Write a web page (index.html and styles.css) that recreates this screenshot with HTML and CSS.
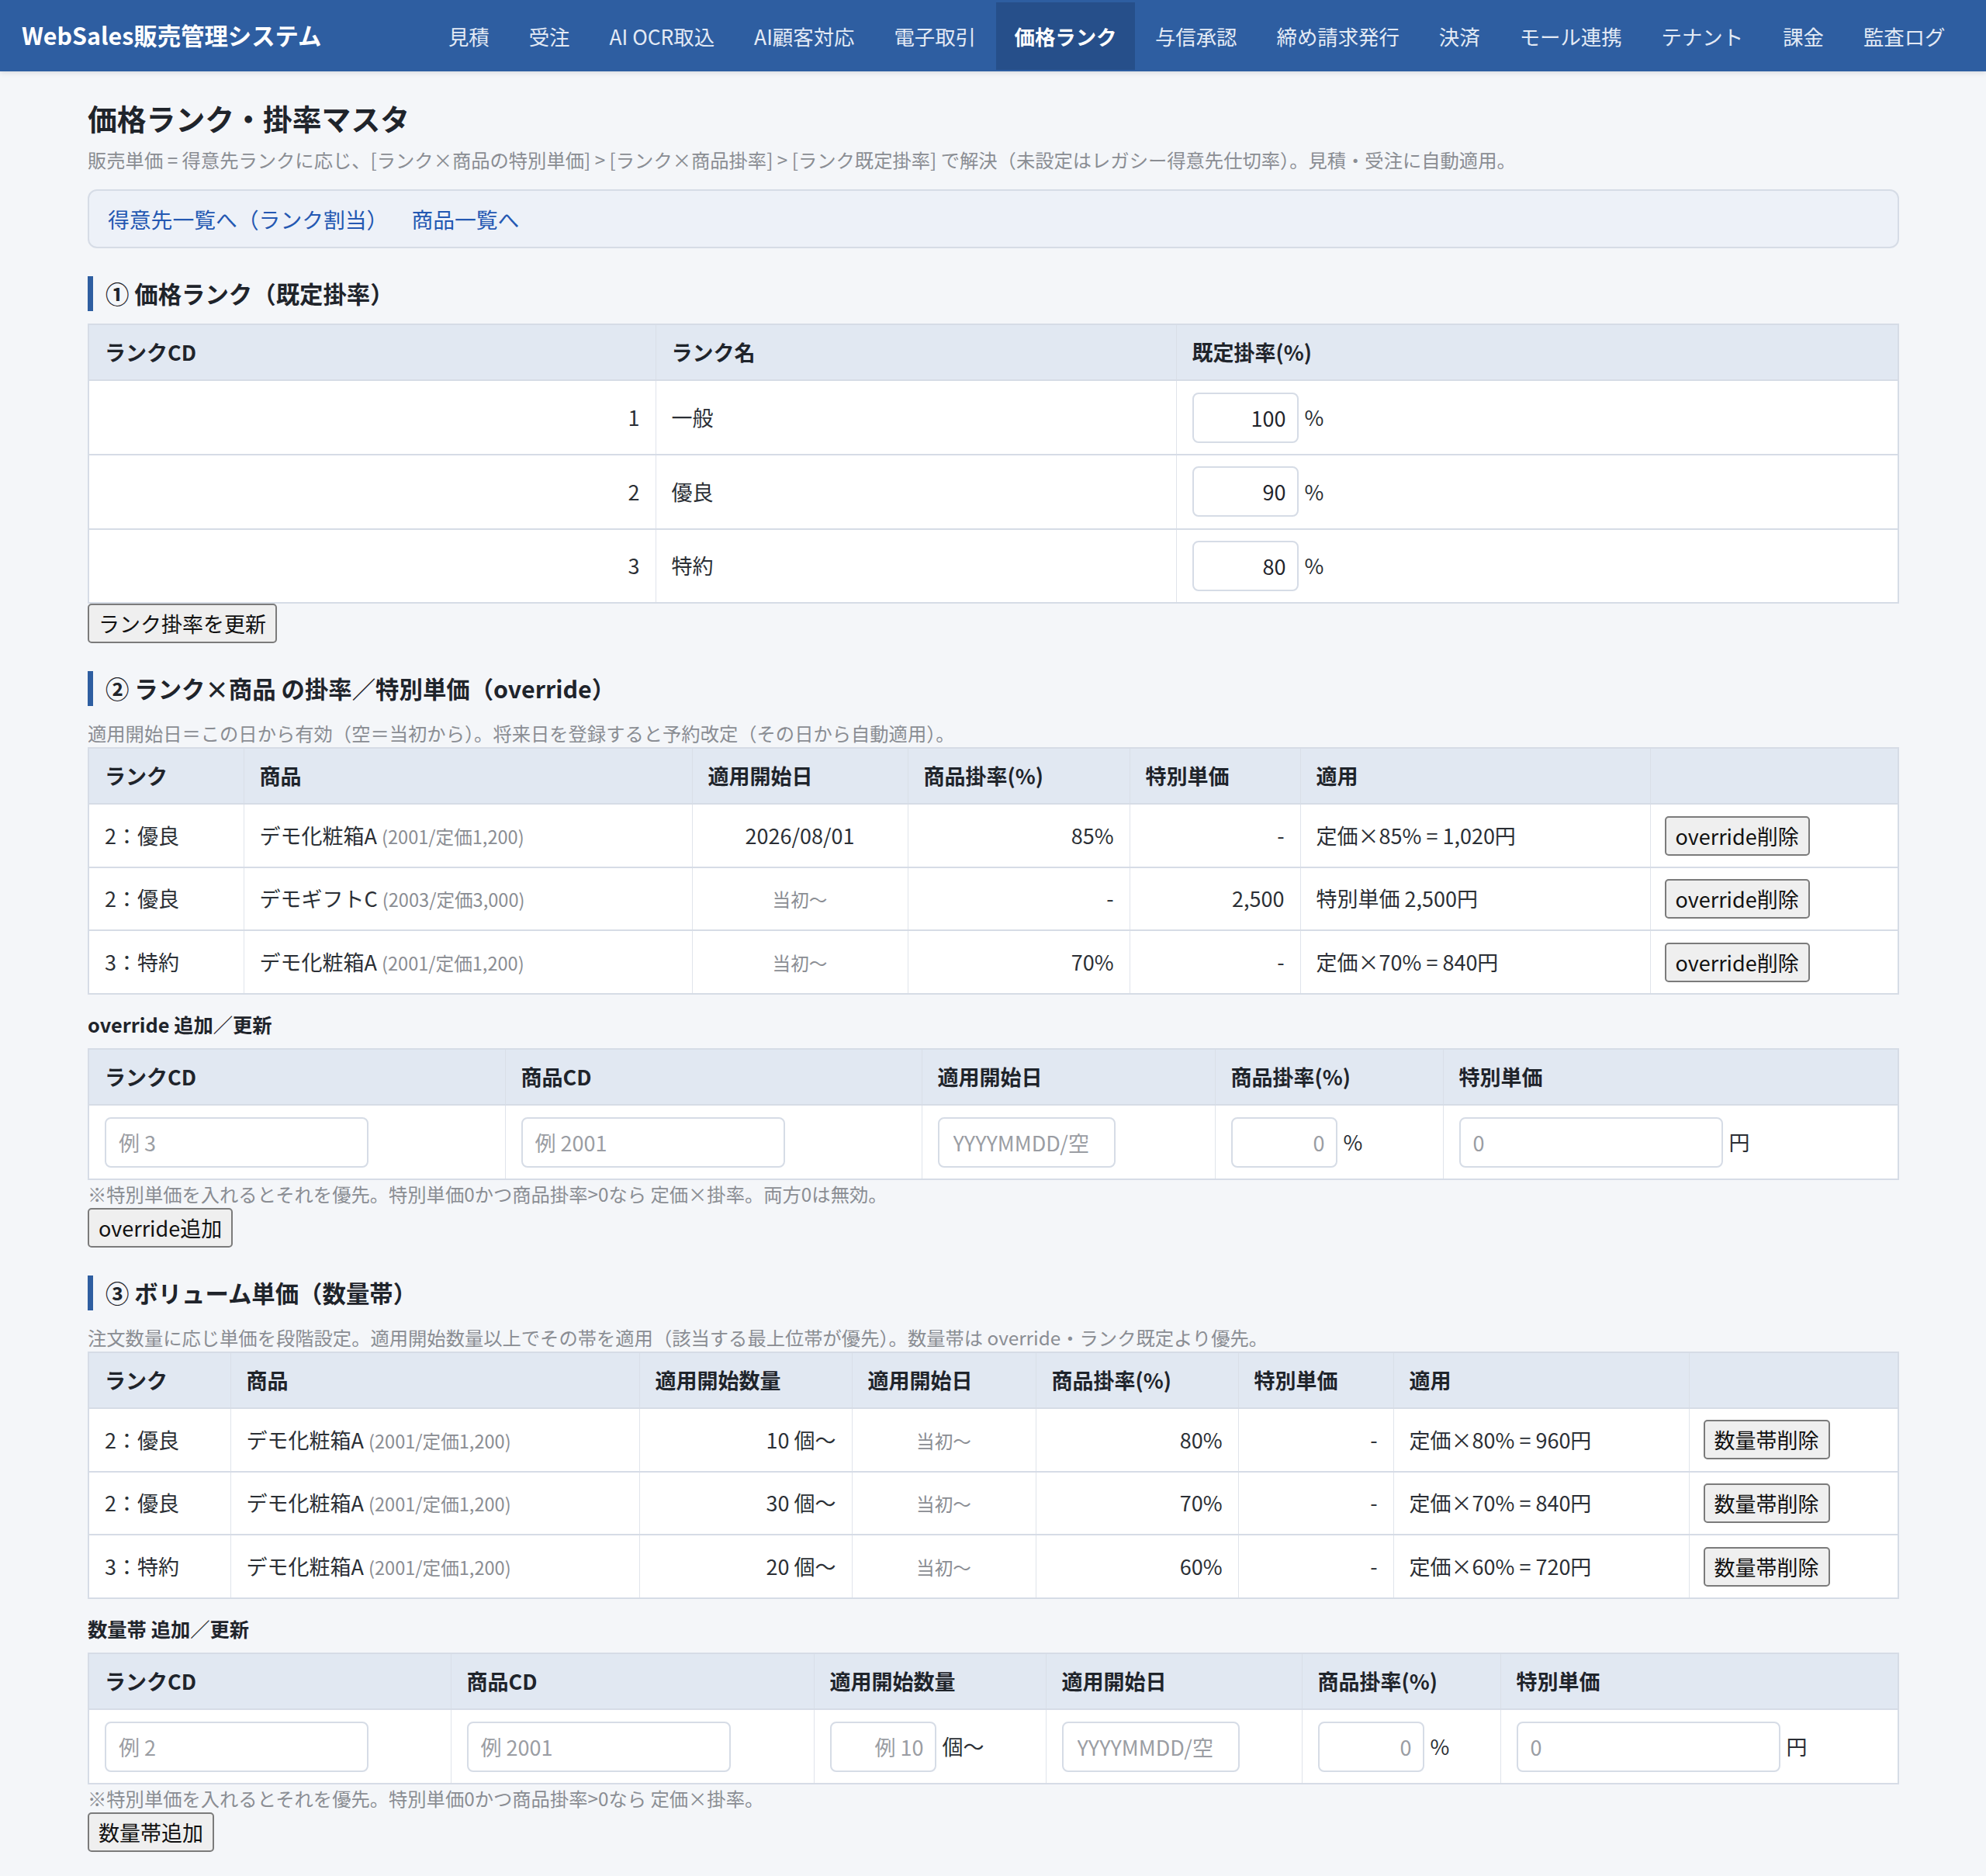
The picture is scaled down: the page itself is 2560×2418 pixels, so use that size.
FILE: index.html
```html
<!DOCTYPE html>
<html lang="ja">
<head>
<meta charset="utf-8">
<title>価格ランク・掛率マスタ</title>
<link rel="stylesheet" href="styles.css">
</head>
<body>
<header class="topnav">
  <div class="brand">WebSales販売管理システム</div>
  <nav class="menu">
    <a href="#">見積</a>
    <a href="#">受注</a>
    <a href="#">AI OCR取込</a>
    <a href="#">AI顧客対応</a>
    <a href="#">電子取引</a>
    <a href="#" class="active">価格ランク</a>
    <a href="#">与信承認</a>
    <a href="#">締め請求発行</a>
    <a href="#">決済</a>
    <a href="#">モール連携</a>
    <a href="#">テナント</a>
    <a href="#">課金</a>
    <a href="#">監査ログ</a>
  </nav>
</header>

<main class="page">
  <h1 class="page-title">価格ランク・掛率マスタ</h1>
  <p class="lead">販売単価 = 得意先ランクに応じ、[ランク×商品の特別単価] &gt; [ランク×商品掛率] &gt; [ランク既定掛率] で解決（未設定はレガシー得意先仕切率）。見積・受注に自動適用。</p>
  <div class="linkbar">
    <a href="#">得意先一覧へ（ランク割当）</a>
    <a href="#">商品一覧へ</a>
  </div>

  <h2 class="sec">① 価格ランク（既定掛率）</h2>
  <table class="grid">
    <colgroup><col class="r-cd"><col class="r-name"><col></colgroup>
    <thead>
      <tr><th>ランクCD</th><th>ランク名</th><th>既定掛率(%)</th></tr>
    </thead>
    <tbody>
      <tr><td class="num">1</td><td>一般</td><td><div class="fld"><input class="inp inp-num" value="100"><span class="unit">%</span></div></td></tr>
      <tr><td class="num">2</td><td>優良</td><td><div class="fld"><input class="inp inp-num" value="90"><span class="unit">%</span></div></td></tr>
      <tr><td class="num">3</td><td>特約</td><td><div class="fld"><input class="inp inp-num" value="80"><span class="unit">%</span></div></td></tr>
    </tbody>
  </table>
  <button class="btn">ランク掛率を更新</button>

  <h2 class="sec">② ランク×商品 の掛率／特別単価（override）</h2>
  <p class="note">適用開始日＝この日から有効（空＝当初から）。将来日を登録すると予約改定（その日から自動適用）。</p>
  <table class="grid">
    <colgroup><col class="o-rank"><col class="o-item"><col class="o-date"><col class="o-rate"><col class="o-price"><col class="o-apply"><col></colgroup>
    <thead>
      <tr><th>ランク</th><th>商品</th><th>適用開始日</th><th>商品掛率(%)</th><th>特別単価</th><th>適用</th><th></th></tr>
    </thead>
    <tbody>
      <tr>
        <td>2：優良</td>
        <td>デモ化粧箱A <span class="sub">(2001/定価1,200)</span></td>
        <td class="ctr">2026/08/01</td>
        <td class="num">85%</td>
        <td class="num">-</td>
        <td>定価×85% = 1,020円</td>
        <td><button class="btn btn-cell">override削除</button></td>
      </tr>
      <tr>
        <td>2：優良</td>
        <td>デモギフトC <span class="sub">(2003/定価3,000)</span></td>
        <td class="ctr"><span class="sub">当初〜</span></td>
        <td class="num">-</td>
        <td class="num">2,500</td>
        <td>特別単価 2,500円</td>
        <td><button class="btn btn-cell">override削除</button></td>
      </tr>
      <tr>
        <td>3：特約</td>
        <td>デモ化粧箱A <span class="sub">(2001/定価1,200)</span></td>
        <td class="ctr"><span class="sub">当初〜</span></td>
        <td class="num">70%</td>
        <td class="num">-</td>
        <td>定価×70% = 840円</td>
        <td><button class="btn btn-cell">override削除</button></td>
      </tr>
    </tbody>
  </table>

  <h3 class="subhead">override 追加／更新</h3>
  <table class="grid">
    <colgroup><col class="of-rank"><col class="of-item"><col class="of-date"><col class="of-rate"><col></colgroup>
    <thead>
      <tr><th>ランクCD</th><th>商品CD</th><th>適用開始日</th><th>商品掛率(%)</th><th>特別単価</th></tr>
    </thead>
    <tbody>
      <tr>
        <td><div class="fld"><input class="inp inp-wide" placeholder="例 3"></div></td>
        <td><div class="fld"><input class="inp inp-wide" placeholder="例 2001"></div></td>
        <td><div class="fld"><input class="inp inp-date" placeholder="YYYYMMDD/空"></div></td>
        <td><div class="fld"><input class="inp inp-num" placeholder="0"><span class="unit">%</span></div></td>
        <td><div class="fld"><input class="inp inp-wide" placeholder="0"><span class="unit">円</span></div></td>
      </tr>
    </tbody>
  </table>
  <p class="hint">※特別単価を入れるとそれを優先。特別単価0かつ商品掛率&gt;0なら 定価×掛率。両方0は無効。</p>
  <button class="btn">override追加</button>

  <h2 class="sec">③ ボリューム単価（数量帯）</h2>
  <p class="note">注文数量に応じ単価を段階設定。適用開始数量以上でその帯を適用（該当する最上位帯が優先）。数量帯は override・ランク既定より優先。</p>
  <table class="grid">
    <colgroup><col class="v-rank"><col class="v-item"><col class="v-qty"><col class="v-date"><col class="v-rate"><col class="v-price"><col class="v-apply"><col></colgroup>
    <thead>
      <tr><th>ランク</th><th>商品</th><th>適用開始数量</th><th>適用開始日</th><th>商品掛率(%)</th><th>特別単価</th><th>適用</th><th></th></tr>
    </thead>
    <tbody>
      <tr>
        <td>2：優良</td>
        <td>デモ化粧箱A <span class="sub">(2001/定価1,200)</span></td>
        <td class="num">10 個〜</td>
        <td class="ctr"><span class="sub">当初〜</span></td>
        <td class="num">80%</td>
        <td class="num">-</td>
        <td>定価×80% = 960円</td>
        <td><button class="btn btn-cell">数量帯削除</button></td>
      </tr>
      <tr>
        <td>2：優良</td>
        <td>デモ化粧箱A <span class="sub">(2001/定価1,200)</span></td>
        <td class="num">30 個〜</td>
        <td class="ctr"><span class="sub">当初〜</span></td>
        <td class="num">70%</td>
        <td class="num">-</td>
        <td>定価×70% = 840円</td>
        <td><button class="btn btn-cell">数量帯削除</button></td>
      </tr>
      <tr>
        <td>3：特約</td>
        <td>デモ化粧箱A <span class="sub">(2001/定価1,200)</span></td>
        <td class="num">20 個〜</td>
        <td class="ctr"><span class="sub">当初〜</span></td>
        <td class="num">60%</td>
        <td class="num">-</td>
        <td>定価×60% = 720円</td>
        <td><button class="btn btn-cell">数量帯削除</button></td>
      </tr>
    </tbody>
  </table>

  <h3 class="subhead">数量帯 追加／更新</h3>
  <table class="grid">
    <colgroup><col class="vf-rank"><col class="vf-item"><col class="vf-qty"><col class="vf-date"><col class="vf-rate"><col></colgroup>
    <thead>
      <tr><th>ランクCD</th><th>商品CD</th><th>適用開始数量</th><th>適用開始日</th><th>商品掛率(%)</th><th>特別単価</th></tr>
    </thead>
    <tbody>
      <tr>
        <td><div class="fld"><input class="inp inp-wide" placeholder="例 2"></div></td>
        <td><div class="fld"><input class="inp inp-wide" placeholder="例 2001"></div></td>
        <td><div class="fld"><input class="inp inp-num" placeholder="例 10"><span class="unit">個〜</span></div></td>
        <td><div class="fld"><input class="inp inp-date" placeholder="YYYYMMDD/空"></div></td>
        <td><div class="fld"><input class="inp inp-num" placeholder="0"><span class="unit">%</span></div></td>
        <td><div class="fld"><input class="inp inp-wide" placeholder="0"><span class="unit">円</span></div></td>
      </tr>
    </tbody>
  </table>
  <p class="hint">※特別単価を入れるとそれを優先。特別単価0かつ商品掛率&gt;0なら 定価×掛率。</p>
  <button class="btn">数量帯追加</button>
</main>
</body>
</html>
```

FILE: styles.css
```css
* { box-sizing: border-box; }

html, body { margin: 0; padding: 0; }

body {
  background: #f4f6f9;
  color: #252a31;
  font-family: "Noto Sans CJK JP", "Noto Sans", sans-serif;
  font-size: 27px;
  line-height: 1.5;
}

/* ---------- top navigation ---------- */
.topnav {
  height: 92px;
  background: #2e5ea1;
  display: flex;
  align-items: center;
  justify-content: space-between;
  padding: 0 27px 0 28px;
  box-shadow: 0 2px 6px rgba(30, 40, 60, 0.12);
}

.brand {
  color: #fff;
  font-weight: 700;
  font-size: 30.4px;
  white-space: nowrap;
}

.menu {
  display: flex;
  align-self: stretch;
  padding: 3px 0 2px;
}

.menu a {
  display: flex;
  align-items: center;
  padding: 0 25.5px;
  color: #e3eaf5;
  font-size: 26.4px;
  text-decoration: none;
  white-space: nowrap;
}

.menu a.active {
  background: #264f8a;
  color: #fff;
  font-weight: 700;
  padding: 0 24px;
}

/* ---------- page ---------- */
.page {
  padding: 35px 112px 31px 113px;
}

.page-title {
  margin: 0 0 12px;
  font-size: 37.8px;
  line-height: 49px;
  font-weight: 700;
  color: #1f242b;
}

.lead {
  margin: 0 0 20px;
  font-size: 24.3px;
  color: #8a8d93;
}

.linkbar {
  display: flex;
  gap: 30px;
  padding: 16px 24px;
  background: #edf1f8;
  border: 2px solid #d6dce6;
  border-radius: 12px;
  font-size: 27.8px;
  line-height: 40px;
}

.linkbar a {
  color: #2458b2;
  text-decoration: none;
}

.sec {
  margin: 35.5px 0 16px;
  padding-left: 16px;
  border-left: 7px solid #2e5ea1;
  font-size: 30.4px;
  line-height: 45px;
  font-weight: 700;
  color: #1f242b;
}

.note {
  margin: 0;
  font-size: 24.3px;
  line-height: 37px;
  color: #8a8d93;
}

.subhead {
  margin: 20px 0 11px;
  font-size: 25.3px;
  font-weight: 700;
  color: #1f242b;
}

.hint {
  margin: 0;
  font-size: 24.3px;
  line-height: 36px;
  color: #8a8d93;
}

/* ---------- tables ---------- */
.grid {
  width: 100%;
  table-layout: fixed;
  border-collapse: collapse;
  background: #fff;
  border: 2px solid #d6dce6;
}

.grid th {
  background: #e1e8f2;
  text-align: left;
  font-weight: 700;
  color: #1f242b;
  padding: 15px 20px;
  border-top: 2px solid #d6dce6;
  border-bottom: 2px solid #d6dce6;
  border-left: 1px solid #d9dfe8;
  border-right: 1px solid #d9dfe8;
  white-space: nowrap;
}

.grid td {
  padding: 14.3px 20px;
  vertical-align: middle;
  border-top: 2px solid #d6dce6;
  border-bottom: 2px solid #d6dce6;
  border-left: 1px solid #e0e4eb;
  border-right: 1px solid #e0e4eb;
  white-space: nowrap;
  overflow: hidden;
  color: #2b2f35;
}

.grid .num { text-align: right; }
.grid .ctr { text-align: center; }

.sub {
  font-size: 23.6px;
  color: #8a8d93;
}

/* column widths */
.r-cd { width: 731px; }
.r-name { width: 671px; }

.o-rank { width: 200px; }
.o-item { width: 578px; }
.o-date { width: 278px; }
.o-rate { width: 286px; }
.o-price { width: 220px; }
.o-apply { width: 451px; }

.of-rank { width: 537px; }
.of-item { width: 537px; }
.of-date { width: 378px; }
.of-rate { width: 294px; }

.v-rank { width: 183px; }
.v-item { width: 527px; }
.v-qty { width: 274px; }
.v-date { width: 237px; }
.v-rate { width: 261px; }
.v-price { width: 200px; }
.v-apply { width: 381px; }

.vf-rank { width: 467px; }
.vf-item { width: 468px; }
.vf-qty { width: 299px; }
.vf-date { width: 330px; }
.vf-rate { width: 256px; }

/* ---------- form controls ---------- */
.fld {
  display: flex;
  align-items: center;
  gap: 8px;
}

.inp {
  font: inherit;
  font-size: 27px;
  height: 65px;
  padding: 0 16px;
  border: 2px solid #d6dce6;
  border-radius: 8px;
  background: #fff;
  color: #1f242b;
  flex: none;
}

.inp::placeholder { color: #9a9da3; }

.inp-wide { width: 340px; }
.inp-date { width: 229px; padding: 0 14px 0 18px; }
.inp-num { width: 137px; text-align: right; padding-right: 14px; }

.unit { color: #2b2f35; }

.btn {
  display: block;
  width: fit-content;
  font: inherit;
  font-size: 27px;
  line-height: 39px;
  padding: 4px 12px;
  border: 2px solid #7b7b7b;
  border-radius: 5px;
  background: #efefef;
  color: #111;
  white-space: nowrap;
}

.btn-cell {
  margin-left: -2px;
}
```
